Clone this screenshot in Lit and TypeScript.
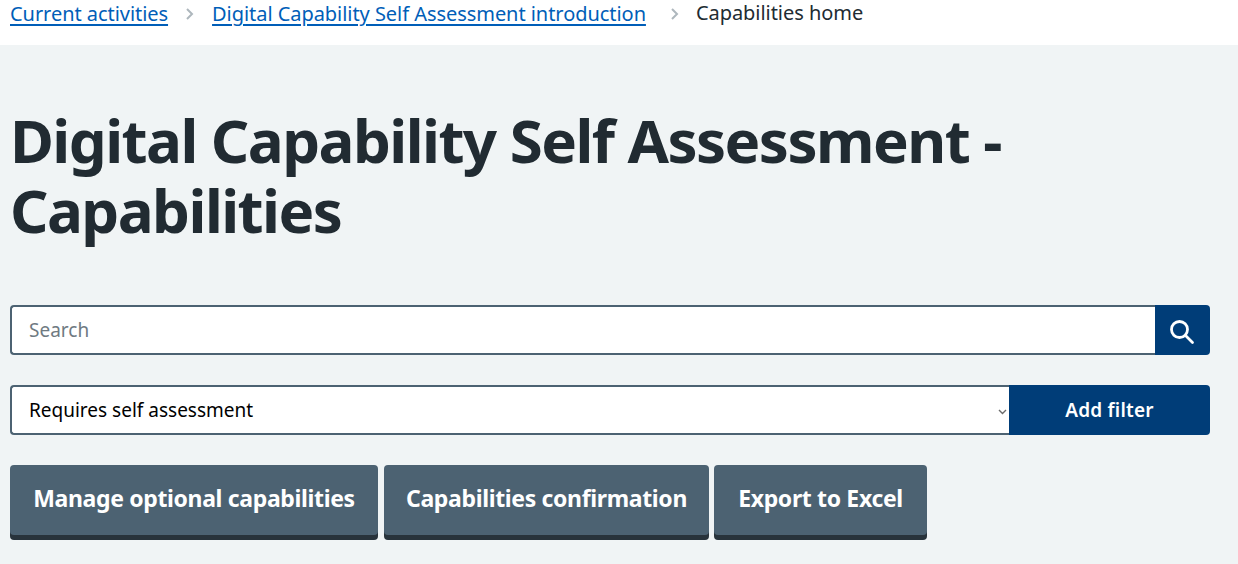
import { customElement } from 'lit/decorators.js';
import { css, html, LitElement } from 'lit';

@customElement('app-root')
export class AppRoot extends LitElement {
  static override styles = css`
    :host {
      display: block;
      height: 564px;
      overflow: hidden;
      background: #f0f4f5;
      font-family: 'Noto Sans', 'Open Sans', sans-serif;
      color: #212b32;
    }

    .crumbs {
      height: 45px;
      background: #fff;
      padding-left: 10px;
      box-sizing: border-box;
      display: flex;
      align-items: flex-start;
      font-size: 20px;
      line-height: 28px;
      letter-spacing: -0.05px;
    }

    .crumbs a {
      color: #005eb8;
      text-decoration: underline;
      text-underline-offset: 3px;
    }

    .crumbs svg {
      width: 18px;
      height: 28px;
      margin: 0 13px;
      flex: none;
    }

    .crumbs svg.last {
      margin: 0 12px 0 20px;
    }

    .crumbs .current {
      margin-top: -1px;
    }

    .content {
      padding: 60px 28px 0 10px;
    }

    h1 {
      margin: 0 0 60px;
      font-size: 60px;
      line-height: 70px;
      font-weight: 700;
      letter-spacing: -1.55px;
    }

    .search,
    .filter {
      display: flex;
      height: 50px;
    }

    .search {
      margin-bottom: 30px;
    }

    .field {
      flex: 1;
      box-sizing: border-box;
      background: #fff;
      border: 2px solid #4c6272;
      border-right: 0;
      border-radius: 4px 0 0 4px;
      font-size: 19px;
      display: flex;
      align-items: center;
      padding-left: 17px;
    }

    .placeholder {
      color: #6f7a82;
    }

    .select {
      position: relative;
      color: #000;
    }

    .chevron {
      position: absolute;
      right: 2px;
      top: 22px;
      width: 9px;
      height: 6px;
    }

    .search-btn {
      width: 55px;
      background: #003d78;
      border-radius: 0 4px 4px 0;
      display: flex;
      align-items: center;
      justify-content: center;
    }

    .search-btn svg {
      width: 26px;
      height: 26px;
      margin: 4px 2px 0 0;
    }

    .add-btn {
      width: 201px;
      background: #003d78;
      border-radius: 0 4px 4px 0;
      color: #fff;
      font-size: 19px;
      font-weight: 600;
      letter-spacing: 0.2px;
      display: flex;
      align-items: center;
      justify-content: center;
    }

    .actions {
      display: flex;
      gap: 6px;
      margin-top: 30px;
    }

    .action {
      height: 70px;
      box-sizing: border-box;
      padding-bottom: 5px;
      background: #4c6272;
      border-radius: 4px;
      box-shadow: 0 5px 0 #28333b;
      color: #fff;
      font-size: 23px;
      font-weight: 700;
      letter-spacing: -0.35px;
      display: flex;
      align-items: center;
      justify-content: center;
    }

    .manage {
      width: 368px;
    }

    .confirm {
      width: 325px;
    }

    .export {
      width: 213px;
      margin-left: -1px;
    }
  `;

  override render() {
    return html`
      <nav class="crumbs">
        <a href="#">Current activities</a>
        <svg viewBox="0 0 18 28" fill="none" stroke="#aeb7bd" stroke-width="2">
          <path d="M6 9l5 5-5 5" />
        </svg>
        <a href="#">Digital Capability Self Assessment introduction</a>
        <svg class="last" viewBox="0 0 18 28" fill="none" stroke="#aeb7bd" stroke-width="2">
          <path d="M6 9l5 5-5 5" />
        </svg>
        <span class="current">Capabilities home</span>
      </nav>
      <main class="content">
        <h1>Digital Capability Self Assessment - Capabilities</h1>
        <div class="search">
          <div class="field"><span class="placeholder">Search</span></div>
          <div class="search-btn">
            <svg viewBox="0 0 26 26" fill="none" stroke="#fff" stroke-width="2.8" stroke-linecap="round">
              <circle cx="10.5" cy="10.5" r="8" />
              <path d="M16.5 16.5l7 7" />
            </svg>
          </div>
        </div>
        <div class="filter">
          <div class="field select">
            Requires self assessment
            <svg class="chevron" viewBox="0 0 9 6" fill="none" stroke="#6b6b6b" stroke-width="1.4">
              <path d="M1 1l3.5 3.5L8 1" />
            </svg>
          </div>
          <div class="add-btn">Add filter</div>
        </div>
        <div class="actions">
          <div class="action manage">Manage optional capabilities</div>
          <div class="action confirm">Capabilities confirmation</div>
          <div class="action export">Export to Excel</div>
        </div>
      </main>
    `;
  }
}
